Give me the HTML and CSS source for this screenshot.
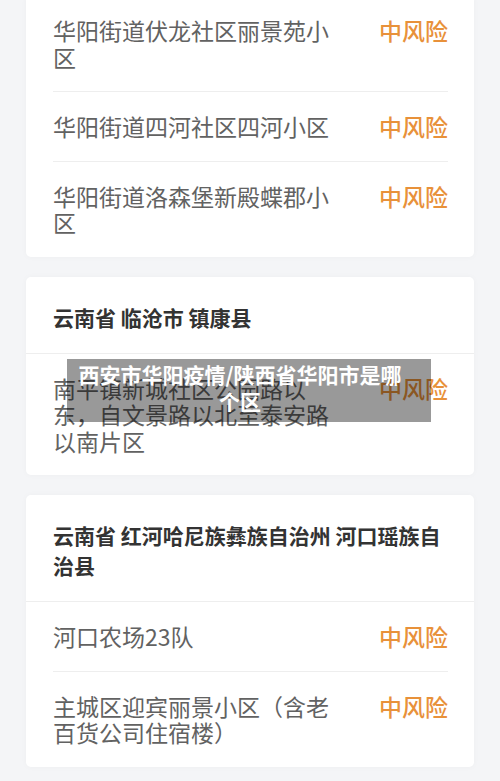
FILE: index.html
```html
<!DOCTYPE html>
<html lang="zh-CN">
    <head>
        <title>西安市华阳疫情</title>
        <meta charset="UTF-8"/>
        <meta name="viewport" content="width=device-width" />
        <link rel="stylesheet" href="styles.css">
    </head>
    <body>
        <div id="page">
            <div class="card">
                <div class="row">
                    <span class="nome">华阳街道伏龙社区丽景苑小区</span>
                    <span class="risco">中风险</span>
                </div>
                <div class="row">
                    <span class="nome">华阳街道四河社区四河小区</span>
                    <span class="risco">中风险</span>
                </div>
                <div class="row">
                    <span class="nome">华阳街道洛森堡新殿蝶郡小区</span>
                    <span class="risco">中风险</span>
                </div>
            </div>

            <div class="card">
                <div class="titulo">云南省 临沧市 镇康县</div>
                <div class="row">
                    <span class="nome">南平镇新城社区公园路以东，自文景路以北至泰安路以南片区</span>
                    <span class="risco">中风险</span>
                </div>
            </div>

            <div class="card">
                <div class="titulo">云南省 红河哈尼族彝族自治州 河口瑶族自治县</div>
                <div class="row">
                    <span class="nome">河口农场23队</span>
                    <span class="risco">中风险</span>
                </div>
                <div class="row">
                    <span class="nome">主城区迎宾丽景小区（含老百货公司住宿楼）</span>
                    <span class="risco">中风险</span>
                </div>
            </div>
        </div>

        <div class="legenda">西安市华阳疫情/陕西省华阳市是哪个区</div>
    </body>
</html>
```

FILE: styles.css
```css
* {
	margin: 0px;
	padding: 0px;
	box-sizing: border-box;
}

body {
	background: #f4f5f7;
	font-family: "Noto Sans CJK SC", sans-serif;
	height: 781px;
	overflow: hidden;
}

#page {
	display: flex;
	flex-direction: column;
	gap: 20px;
	padding: 0px 26px;
	margin-top: -4px;
}

.card {
	background: #ffffff;
	border-radius: 5px;
	box-shadow: 0px 0px 6px rgba(0, 0, 0, 0.03);
}

.titulo {
	font-size: 21px;
	font-weight: bold;
	line-height: 30px;
	color: #333333;
	padding: 25px 27px 21px 27px;
	border-bottom: 1px solid #eeeeee;
}

.row {
	display: flex;
	justify-content: space-between;
	align-items: flex-start;
	margin: 0px 26px 0px 27px;
	padding: 21px 0px;
	font-size: 23px;
	line-height: 26.5px;
}

.row + .row {
	border-top: 1px solid #eeeeee;
}

.nome {
	width: 288px;
	color: #626262;
}

.risco {
	color: #e8913a;
	font-weight: 500;
}

.legenda {
	position: absolute;
	left: 67px;
	top: 359px;
	width: 364px;
	height: 63px;
	padding: 2px 28px 0px 10px;
	background: rgba(0, 0, 0, 0.4);
	color: #ffffff;
	font-size: 21px;
	font-weight: bold;
	line-height: 27px;
	text-align: center;
}
```
